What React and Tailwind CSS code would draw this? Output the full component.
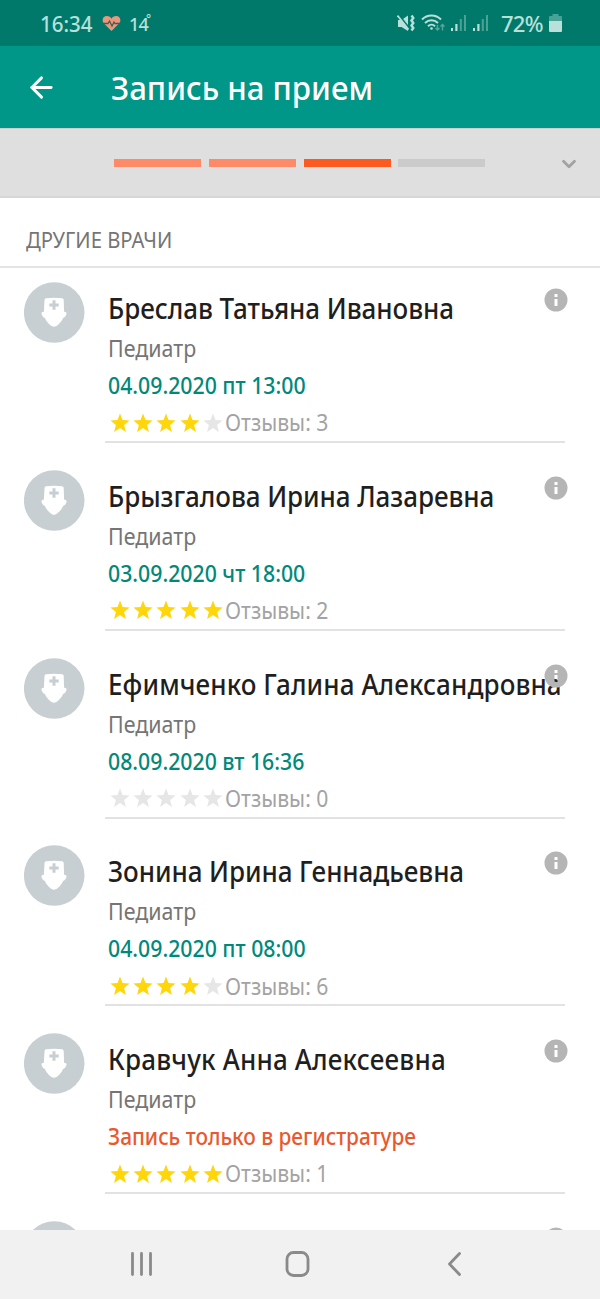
import { ArrowLeft, ChevronDown } from 'lucide-react'
import clsx from 'clsx'

const STEPS = ['done', 'done', 'current', 'next']

const DOCTORS = [
  { name: 'Бреслав Татьяна Ивановна',       slot: '04.09.2020 пт 13:00', rating: 4, reviews: 3, tracking: 'tracking-[-0.06px]' },
  { name: 'Брызгалова Ирина Лазаревна',     slot: '03.09.2020 чт 18:00', rating: 5, reviews: 2, tracking: 'tracking-[-0.07px]' },
  { name: 'Ефимченко Галина Александровна', slot: '08.09.2020 вт 16:36', rating: 0, reviews: 0, tracking: 'tracking-[0.1px]'   },
  { name: 'Зонина Ирина Геннадьевна',       slot: '04.09.2020 пт 08:00', rating: 4, reviews: 6, tracking: 'tracking-[-0.08px]' },
  { name: 'Кравчук Анна Алексеевна',        slot: null,                  rating: 5, reviews: 1, tracking: 'tracking-[0.2px]'   },
]

function Signal() {
  return (
    <svg width="17" height="18" viewBox="0 0 17 18" fill="currentColor">
      <rect x="0" y="14" width="2" height="3" />
      <rect x="4.3" y="10" width="2.2" height="7" />
      <rect x="8.8" y="5" width="2" height="12" opacity="0.4" />
      <rect x="13" y="1" width="2" height="16" opacity="0.4" />
    </svg>
  )
}

function StatusBar() {
  return (
    <div className="h-[46px] shrink-0 bg-[#00796b] text-[#b9e0da] flex items-center pl-[40px] pr-[38px]">
      <span className="text-[22px] font-medium w-[62px] origin-left scale-x-[0.93]">16:34</span>
      <svg width="19" height="17" viewBox="0 0 19 17">
        <path d="M9.500 16 2 8.600C-.8 5.400.9 1 4.900 1c2 0 3.700 1 4.600 2.700C10.400 2 12.100 1 14.100 1c4 0 5.700 4.400 2.900 7.600Z" fill="#f0957d" />
        <path d="M1 8.500h5l1.500-2.500 2.500 5 2-4 1 1.500h5" fill="none" stroke="#3b6350" strokeWidth="1.300" />
      </svg>
      <span className="text-[18px] font-medium tracking-[-0.8px] ml-[8px] mt-[2px]">14</span>
      <span className="text-[12px] font-medium -ml-[2px] -mt-[9px]">°</span>

      <div className="ml-auto flex items-center">
        {/* muted + vibrate */}
        <svg width="19" height="19" viewBox="0 0 19 19" fill="currentColor">
          <path d="M1 6h3.500L11 1.500v15.500L4.500 13H1Z" />
          <path d="M1 0 12.500 14.500" stroke="#00796b" strokeWidth="2" />
          <path d="M.5 1.500 11.500 15.500" stroke="currentColor" strokeWidth="1.800" />
          <path d="m14.500 1.500 1.800 2.500-1.800 2.500 1.800 2.500-1.800 2.500 1.800 2.500-1.800 2.500" fill="none" stroke="currentColor" strokeWidth="2.400" />
        </svg>
        <svg className="ml-[5px]" width="24" height="20" viewBox="0 0 24 20" fill="none" stroke="currentColor" strokeWidth="2">
          <path d="M1 6.500c5.300-5.300 13.700-5.300 19 0M4 10c3.700-3.600 9.300-3.600 13 0M7 13.200c2-1.900 5-1.900 7 0" />
          <circle cx="10.500" cy="15.500" r="1.300" fill="currentColor" stroke="none" />
          <path d="M16.500 12v5m-2-2 2 2 2-2M21.500 17.500v-6m-2 2 2-2 2 2" strokeWidth="1.400" opacity="0.45" />
        </svg>
        <span className="ml-[6px]"><Signal /></span>
        <span className="ml-[5px]"><Signal /></span>
        <span className="text-[22px] font-medium tracking-[-0.6px] ml-[11px]">72%</span>
        <svg className="ml-[6px]" width="13" height="20" viewBox="0 0 13 20" fill="currentColor">
          <path d="M3.500 1h6v2H12a1 1 0 0 1 1 1v4H0V4a1 1 0 0 1 1-1h2.500Z" opacity="0.4" />
          <path d="M0 8h13v10a1 1 0 0 1-1 1H1a1 1 0 0 1-1-1Z" />
        </svg>
      </div>
    </div>
  )
}

function Avatar() {
  return (
    <svg className="shrink-0" width="61" height="61" viewBox="0 0 61 61">
      <circle cx="30.200" cy="30.500" r="30.300" fill="#c7cfd3" />
      <path
        d="M20.500 18.200c0-1 .6-1.700 1.600-1.900 5-.9 11-.9 16 0 1 .2 1.600.9 1.600 1.900l.4 11.500c1.800-.1 3 1 2.300 2.600-.7 2-1.800 3.300-3.400 3.700-1.200 3.600-6 8.800-9 8.800s-7.800-5.200-9-8.800c-1.600-.4-2.700-1.700-3.400-3.700-.7-1.600.5-2.700 2.300-2.600Z"
        fill="#fff"
      />
      <path d="M30 18.300v9.400M25.300 23h9.400" stroke="#c7cfd3" strokeWidth="3" />
    </svg>
  )
}

function InfoIcon() {
  return (
    <svg className="absolute right-[32px] top-[21px]" width="24" height="24" viewBox="0 0 24 24">
      <path
        fillRule="evenodd"
        d="M12 .5a11.500 11.500 0 1 1 0 23a11.500 11.500 0 1 1 0-23ZM10.500 6v3h3V6ZM10.500 11v7h3v-7Z"
        fill="#b5b5b5"
      />
    </svg>
  )
}

function Stars({ rating }) {
  return (
    <div className="flex gap-[3.400px]">
      {[1, 2, 3, 4, 5].map(n => (
        <svg key={n} width="20" height="20" viewBox="0 0 20 20" className={n <= rating ? 'text-[#ffd60a]' : 'text-[#e6e6e6]'}>
          <path d="m10 .4 2.500 6.600 7.100.4-5.500 4.500 1.800 7L10 15l-5.900 3.900 1.800-7L.4 7.400l7.100-.4Z" fill="currentColor" />
        </svg>
      ))}
    </div>
  )
}

function DoctorRow({ name, slot, rating, reviews, tracking }) {
  return (
    <div className="relative h-[187.750px] shrink-0 flex items-start pl-[24px] pr-[35px] pt-[15px]">
      <Avatar />
      <div className="flex-1 min-w-0 ml-[20px] h-[161px] border-b-2 border-[#e2e2e2] pl-[3px] whitespace-nowrap">
        <div className={clsx('h-[49px] leading-[52px] text-[28px] font-medium text-[#1f1f1f] origin-left scale-x-[0.93]', tracking)}>{name}</div>
        <div className="h-[36px] leading-[35px] text-[23px] text-[#757575] origin-left scale-x-[0.93]">Педиатр</div>
        <div className={clsx(
          'h-[38px] leading-[37px] text-[23px] font-medium origin-left',
          slot ? 'scale-x-[0.924] text-[#00897b]' : 'scale-x-[0.906] text-[#e8592f]'
        )}>
          {slot || 'Запись только в регистратуре'}
        </div>
        <div className="h-[35px] flex items-center pl-[1.500px]">
          <Stars rating={rating} />
          <span className="ml-[2px] text-[23px] text-[#a3a3a3] origin-left scale-x-[0.918]">Отзывы: {reviews}</span>
        </div>
      </div>
      <InfoIcon />
    </div>
  )
}

export default function App() {
  return (
    <div className="w-[600px] h-[1299px] overflow-hidden flex flex-col bg-white font-['Noto_Sans',sans-serif]">
      <StatusBar />

      {/* Toolbar */}
      <div className="h-[82px] shrink-0 bg-[#009688] text-white flex items-center pl-[25px]">
        <ArrowLeft size={33} strokeWidth={2.1} />
        <h1 className="ml-[53px] mt-[2px] text-[33px] font-medium whitespace-nowrap origin-left scale-x-[0.945]">Запись на прием</h1>
      </div>

      {/* Steps */}
      <div className="h-[70px] shrink-0 bg-[#dfdfdf] border-t border-t-[#c5d2cf] border-b-2 border-b-[#d6d6d6] flex items-center pl-[114px] pr-[20px]">
        <div className="flex gap-[7.800px]">
          {STEPS.map((s, i) => (
            <div
              key={i}
              className={clsx(
                'w-[87px] h-[8px]',
                s === 'done' && 'bg-[#ff8a68]',
                s === 'current' && 'bg-[#fc5a20]',
                s === 'next' && 'bg-[#cbcbcb]'
              )}
            />
          ))}
        </div>
        <ChevronDown className="ml-auto mt-[3px] text-[#a2a2a2]" size={22} strokeWidth={3} />
      </div>

      <div className="h-[70px] shrink-0 border-b-2 border-[#e4e4e4] flex items-center pl-[26px] pt-[14px]">
        <h2 className="text-[22px] text-[#757575] origin-left scale-x-[0.92]">ДРУГИЕ ВРАЧИ</h2>
      </div>

      <div className="flex-1 min-h-0 overflow-hidden flex flex-col -mt-px">
        {DOCTORS.map(d => <DoctorRow key={d.name} {...d} />)}
        <div className="relative shrink-0 pl-[24px] pt-[15px]">
          <Avatar />
          <InfoIcon />
        </div>
      </div>

      {/* System navigation */}
      <div className="h-[69px] shrink-0 bg-[#f1f1f1] flex items-center text-[#8a8a8a]">
        <svg className="ml-[130px] -mt-[2px]" width="23" height="26" viewBox="0 0 23 26" stroke="currentColor" strokeWidth="2.800" strokeLinecap="round">
          <path d="M2.500 2.500v21M11.500 2.500v21M20.500 2.500v21" />
        </svg>
        <svg className="ml-[132px] -mt-[2px]" width="25" height="28" viewBox="0 0 25 28" fill="none" stroke="currentColor" strokeWidth="2.800">
          <rect x="2" y="2.500" width="21" height="23" rx="6.500" />
        </svg>
        <svg className="ml-[137px] -mt-[2px]" width="15" height="26" viewBox="0 0 15 26" fill="none" stroke="currentColor" strokeWidth="2.800" strokeLinecap="round" strokeLinejoin="round">
          <path d="M12.500 2.500 2.500 13l10 10.500" />
        </svg>
      </div>
    </div>
  )
}
